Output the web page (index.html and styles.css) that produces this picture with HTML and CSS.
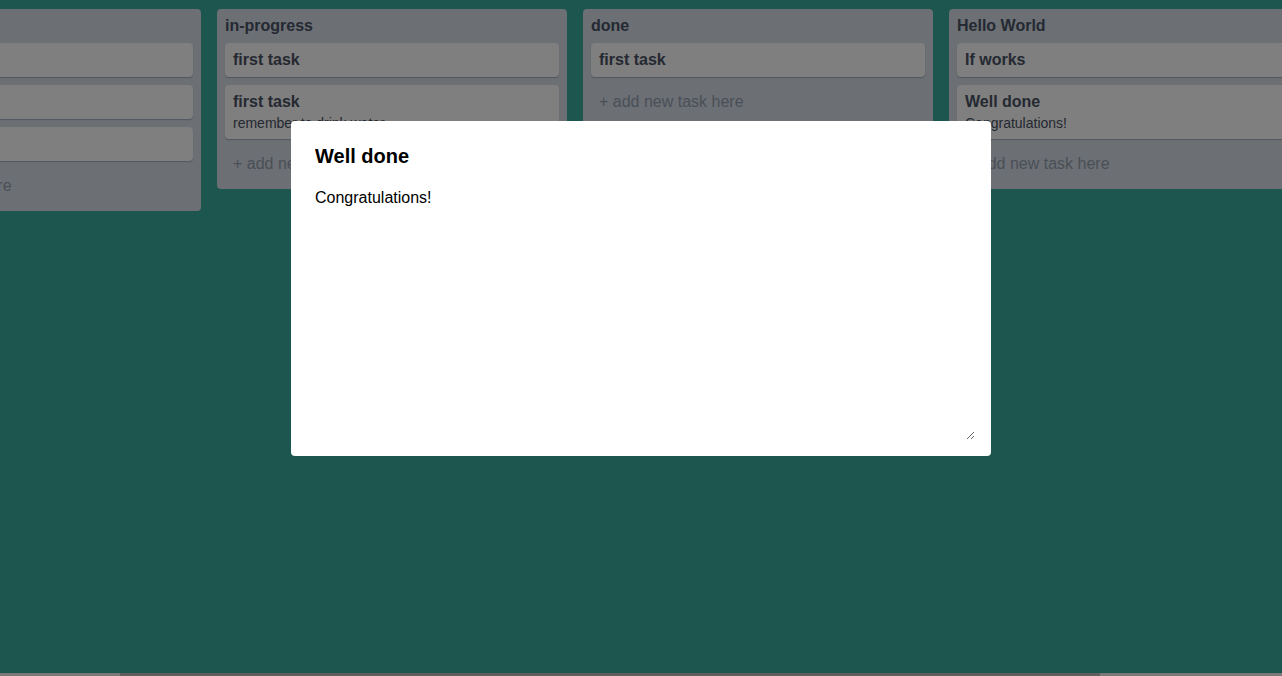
FILE: index.html
```html
<!DOCTYPE html>
<html lang="en">
<head>
<meta charset="utf-8">
<title>Board</title>
<link rel="stylesheet" href="styles.css">
</head>
<body>
<div class="board" id="board">
  <section class="column">
    <h2 class="column-title">todo</h2>
    <div class="card"><div class="card-title">first task</div></div>
    <div class="card"><div class="card-title">second task</div></div>
    <div class="card"><div class="card-title">third task</div></div>
    <div class="add-task">+ add new task here</div>
  </section>
  <section class="column">
    <h2 class="column-title">in-progress</h2>
    <div class="card"><div class="card-title">first task</div></div>
    <div class="card"><div class="card-title">first task</div><div class="card-desc">remember to drink water</div></div>
    <div class="add-task">+ add new task here</div>
  </section>
  <section class="column">
    <h2 class="column-title">done</h2>
    <div class="card"><div class="card-title">first task</div></div>
    <div class="add-task">+ add new task here</div>
  </section>
  <section class="column">
    <h2 class="column-title">Hello World</h2>
    <div class="card"><div class="card-title">If works</div></div>
    <div class="card"><div class="card-title">Well done</div><div class="card-desc">Congratulations!</div></div>
    <div class="add-task">+ add new task here</div>
  </section>
  <div class="add-list">+ add new list</div>
</div>
<div class="hscroll"><div class="hscroll-thumb"></div></div>

<div class="overlay">
  <div class="modal">
    <h1 class="modal-title">Well done</h1>
    <textarea class="modal-desc">Congratulations!</textarea>
  </div>
</div>
<script src="script.js"></script>
</body>
</html>
```

FILE: styles.css
```css
* { box-sizing: border-box; }

html, body {
  margin: 0;
  padding: 0;
  height: 100%;
  overflow: hidden;
}

body {
  font-family: "Liberation Sans", Arial, sans-serif;
  font-size: 16px;
  background: #3aac9e;
  color: #4a5363;
  display: flex;
  flex-direction: column;
}

.board {
  flex: 1;
  min-height: 0;
  display: flex;
  align-items: flex-start;
  gap: 16px;
  padding: 9px 8px 0 8px;
  overflow: hidden;
}

.hscroll {
  flex: 0 0 3px;
  background: #f2f2f2;
}

.hscroll-thumb {
  width: 980px;
  height: 100%;
  margin-left: 120px;
  background: #bcbcbc;
}

.column {
  flex: 0 0 350px;
  display: flex;
  flex-direction: column;
  gap: 8px;
  padding: 8px;
  background: #d8e0ea;
  border-radius: 4px;
}

.column-title {
  margin: 0;
  font-size: 16px;
  font-weight: bold;
  line-height: normal;
  color: #4a5264;
}

.card {
  background: #fefefe;
  border-radius: 4px;
  padding: 8px;
  box-shadow: 0 1px 1px rgba(9, 30, 66, 0.25);
}

.card-title {
  font-weight: bold;
  color: #4a5264;
}

.card-desc {
  margin-top: 4px;
  font-size: 14px;
  color: #4a5264;
}

.add-task {
  padding: 8px;
  color: #959eaa;
}

.add-list {
  flex: 0 0 197px;
  padding: 8px;
  color: #ffffff;
}

.overlay {
  position: fixed;
  inset: 0;
  background: rgba(0, 0, 0, 0.5);
  display: flex;
  justify-content: center;
  align-items: flex-start;
  padding-top: 121px;
}

.modal {
  width: 700px;
  height: 335px;
  background: #ffffff;
  border-radius: 4px;
  padding: 24px 16px 16px 24px;
  display: flex;
  flex-direction: column;
}

.modal-title {
  margin: 0 0 21px 0;
  font-size: 20px;
  font-weight: bold;
  line-height: normal;
  color: #000000;
}

.modal-desc {
  flex: 1;
  width: 100%;
  border: none;
  outline: none;
  padding: 0;
  margin: 0;
  font-family: "Liberation Sans", Arial, sans-serif;
  font-size: 16px;
  color: #000000;
  background: transparent;
}
```

FILE: script.js
```js
document.getElementById('board').scrollLeft = 157;
```
